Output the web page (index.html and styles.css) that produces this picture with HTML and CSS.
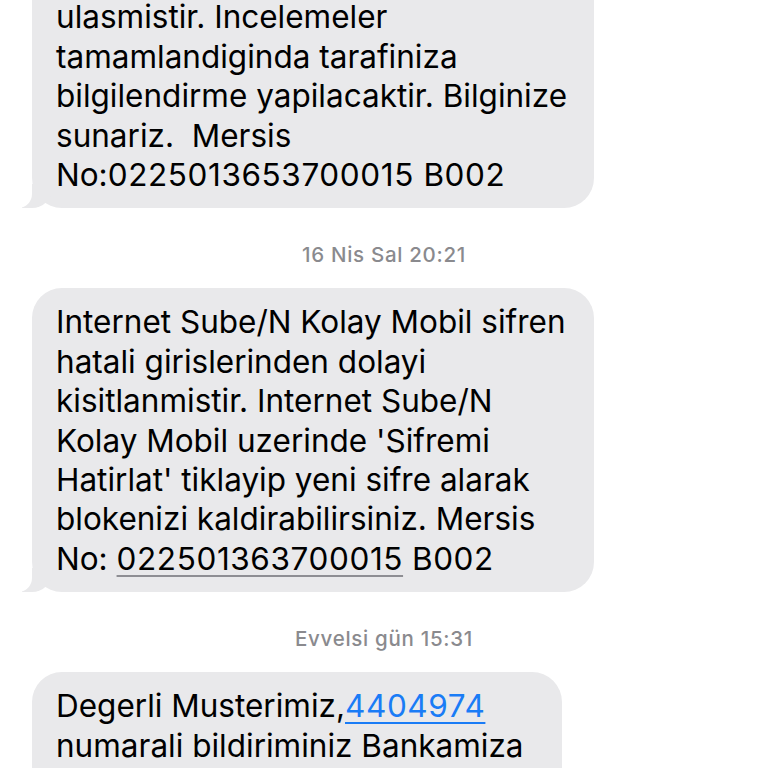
FILE: index.html
```html
<!DOCTYPE html>
<html lang="tr">
<head>
<meta charset="utf-8">
<title>Mesajlar</title>
<link rel="stylesheet" href="styles.css">
</head>
<body>
<div class="chat">
  <div class="bubble wide first tail">numarali bildiriminiz Bankamiza<br>ulasmistir. Incelemeler<br>tamamlandiginda tarafiniza<br>bilgilendirme yapilacaktir. Bilginize<br>sunariz.&nbsp; Mersis<br>No:<span class="digits">0225013653700015 B002</span></div>
  <div class="stamp"><span class="day">16 Nis Sal</span> 20:21</div>
  <div class="bubble wide tail">Internet Sube/N Kolay Mobil sifren<br>hatali girislerinden dolayi<br>kisitlanmistir. Internet Sube/N<br>Kolay Mobil uzerinde 'Sifremi<br>Hatirlat' tiklayip yeni sifre alarak<br>blokenizi kaldirabilirsiniz. Mersis<br>No: <span class="digits num">022501363700015</span> <span class="digits">B002</span></div>
  <div class="stamp"><span class="day">Evvelsi gün</span> 15:31</div>
  <div class="bubble mid">Degerli Musterimiz,<span class="digits link">4404974</span><br>numarali bildiriminiz Bankamiza<br>ulasmistir. Incelemeler</div>
</div>
</body>
</html>
```
FILE: styles.css
```css
html, body {
  margin: 0;
  padding: 0;
  background: #ffffff;
}
body {
  width: 768px;
  height: 768px;
  overflow: hidden;
  font-family: Inter, "Liberation Sans", Arial, sans-serif;
}
.chat {
  display: flex;
  flex-direction: column;
  align-items: flex-start;
  padding-left: 32px;
}
.bubble {
  position: relative;
  box-sizing: border-box;
  background: #e9e9eb;
  color: #000000;
  border-radius: 30px;
  padding: 14px 20px 14px 24px;
  font-size: 31.5px;
  line-height: 39.4px;
  white-space: nowrap;
}
.bubble.wide { width: 562px; }
.bubble.mid { width: 530px; }
.bubble.first { margin-top: -56px; }
.digits { letter-spacing: 0.6px; }
.tail::before {
  content: "";
  position: absolute;
  left: -10px;
  bottom: 0;
  width: 30px;
  height: 24px;
  background: #e9e9eb;
  border-bottom-right-radius: 20px;
}
.tail::after {
  content: "";
  position: absolute;
  left: -30px;
  bottom: 0;
  width: 30px;
  height: 24px;
  background: #ffffff;
  border-bottom-right-radius: 14px;
}
.stamp {
  align-self: center;
  margin: 35px 0 21px -32px;
  font-size: 20.5px;
  line-height: 24px;
  letter-spacing: 0.7px;
  color: #8a8a8e;
  font-weight: 500;
}
.num {
  text-decoration: underline;
  text-decoration-color: #8e8e93;
  text-decoration-thickness: 1.5px;
  text-underline-offset: 5px;
}
.link {
  color: #1a7cf6;
  text-decoration: underline;
  text-decoration-thickness: 1.5px;
  text-underline-offset: 5px;
}
```
